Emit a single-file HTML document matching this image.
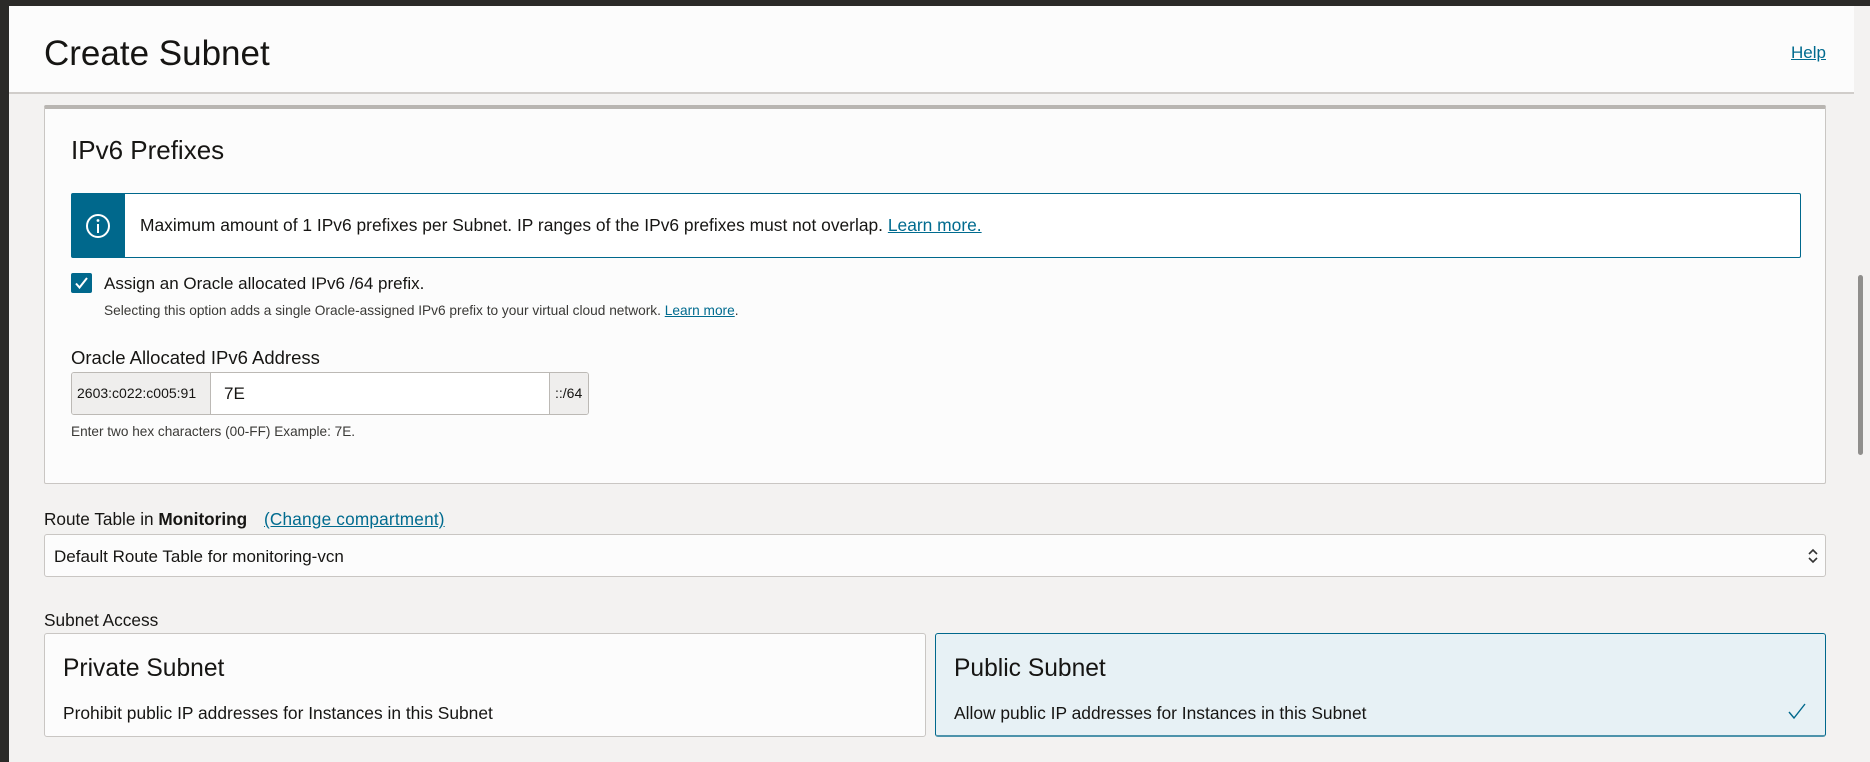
<!DOCTYPE html>
<html><head><meta charset="utf-8"><style>
*{box-sizing:border-box;margin:0;padding:0}
body{width:1870px;height:762px;overflow:hidden;background:#2b2a28;font-family:"Liberation Sans",sans-serif;color:#161513;position:relative}
.main{position:absolute;left:9px;top:6px;width:1845px;height:756px;background:#f3f2f1}
.hdr{position:absolute;left:0;top:0;width:1845px;height:88px;background:#fcfcfc;border-bottom:2px solid #d0cdca}
.abs{position:absolute;white-space:nowrap}
a{color:#006b8f;text-decoration:underline}
.panel{position:absolute;left:35px;top:99px;width:1782px;height:379px;background:#fcfcfc;border:1px solid #c9c6c3;border-top:4px solid #b8b5b1;border-radius:2px}
.info{position:absolute;left:26px;top:84px;width:1730px;height:65px;border:1px solid #00688c;border-radius:2px;background:#fff}
.info .ic{position:absolute;left:0;top:0;width:53px;height:100%;background:#00688c}
.cb{position:absolute;left:26px;top:164px;width:21px;height:20px;background:#00688c;border-radius:2px}
.inp{position:absolute;left:26px;top:263px;width:518px;height:43px;border:1px solid #bcb9b5;border-radius:3px;background:#fff;overflow:hidden}
.sel{position:absolute;left:35px;top:528px;width:1782px;height:43px;background:#fcfcfc;border:1px solid #c9c6c3;border-radius:3px}
.card{position:absolute;top:627px;height:104px;border:1px solid #c9c6c3;border-radius:3px;background:#fcfcfc}
</style></head><body>
<div class="main">
 <div class="hdr">
  <div class="abs" style="left:35px;top:28px;font-size:35px">Create Subnet</div>
  <a class="abs" style="left:1782px;top:37px;font-size:17px">Help</a>
 </div>
 <div class="panel">
  <div class="abs" style="left:26px;top:26px;font-size:26px">IPv6 Prefixes</div>
  <div class="info"><div class="ic"><svg width="53" height="63" viewBox="0 0 53 63"><circle cx="26" cy="32" r="11" fill="none" stroke="#fff" stroke-width="2"/><circle cx="26" cy="26.5" r="1.4" fill="#fff"/><rect x="25" y="30" width="2" height="9" fill="#fff"/></svg></div>
   <div class="abs" style="left:68px;top:21px;font-size:17.4px">Maximum amount of 1 IPv6 prefixes per Subnet. IP ranges of the IPv6 prefixes must not overlap. <a>Learn more.</a></div></div>
  <div class="cb"><svg width="21" height="20" viewBox="0 0 21 20"><path d="M5 10.5l3.5 4L16 5" fill="none" stroke="#fff" stroke-width="2"/></svg></div>
  <div class="abs" style="left:59px;top:165px;font-size:17px">Assign an Oracle allocated IPv6 /64 prefix.</div>
  <div class="abs" style="left:59px;top:194px;font-size:13.7px;color:#3a3936">Selecting this option adds a single Oracle-assigned IPv6 prefix to your virtual cloud network. <a>Learn more</a>.</div>
  <div class="abs" style="left:26px;top:238px;font-size:18.5px">Oracle Allocated IPv6 Address</div>
  <div class="inp">
   <div class="abs" style="left:0;top:0;width:139px;height:41px;background:#efeeed;border-right:1px solid #bcb9b5;font-size:14px;padding:12px 0 0 5px">2603:c022:c005:91</div>
   <div class="abs" style="left:152px;top:11px;font-size:17px">7E</div>
   <div class="abs" style="left:477px;top:0;width:41px;height:41px;background:#efeeed;border-left:1px solid #bcb9b5;font-size:14px;padding:12px 0 0 5px">::/64</div>
  </div>
  <div class="abs" style="left:26px;top:315px;font-size:13.6px;color:#3a3936">Enter two hex characters (00-FF) Example: 7E.</div>
 </div>
 <div class="abs" style="left:35px;top:503px;font-size:17.2px">Route Table in <b>Monitoring</b></div>
 <a class="abs" style="left:255px;top:503px;font-size:17.2px;letter-spacing:0.2px">(Change compartment)</a>
 <div class="sel"><div class="abs" style="left:9px;top:12px;font-size:17px">Default Route Table for monitoring-vcn</div>
  <svg class="abs" style="left:1762px;top:12px" width="12" height="18" viewBox="0 0 12 18"><path d="M2 7l4-4 4 4M2 11l4 4 4-4" fill="none" stroke="#333" stroke-width="1.6"/></svg></div>
 <div class="abs" style="left:35px;top:604px;font-size:17.3px">Subnet Access</div>
 <div class="card" style="left:35px;width:882px"><div class="abs" style="left:18px;top:21px;font-size:24.6px">Private Subnet</div><div class="abs" style="left:18px;top:69px;font-size:17.4px">Prohibit public IP addresses for Instances in this Subnet</div></div>
 <div class="card" style="left:926px;width:891px;background:#e7f1f5;border-color:#00688c;border-bottom:2px solid #4d93ab"><div class="abs" style="left:18px;top:21px;font-size:24.6px">Public Subnet</div><div class="abs" style="left:18px;top:69px;font-size:17.4px">Allow public IP addresses for Instances in this Subnet</div>
  <svg class="abs" style="left:851px;top:68px" width="20" height="18" viewBox="0 0 20 18"><path d="M2 10l5 6L18 2" fill="none" stroke="#00688c" stroke-width="1.4"/></svg></div>
</div>
<div class="abs" style="left:1854px;top:6px;width:16px;height:756px;background:#f3f2f1"></div>
<div class="abs" style="left:1858px;top:275px;width:5px;height:180px;background:#8f8e8c;border-radius:3px"></div>
</body></html>
